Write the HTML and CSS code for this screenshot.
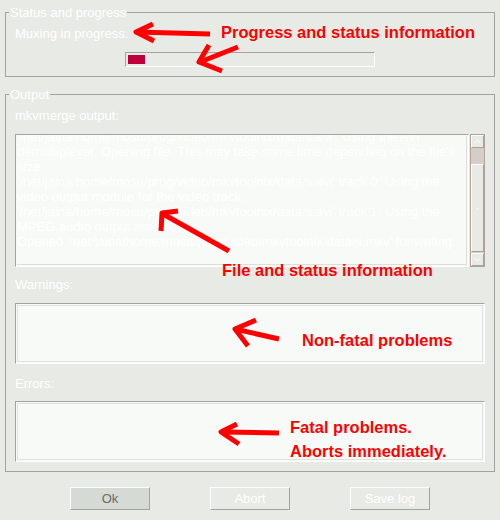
FILE: index.html
```html
<!DOCTYPE html>
<html>
<head>
<meta charset="utf-8">
<link rel="stylesheet" href="styles.css">
</head>
<body>
<div class="window">
  <fieldset class="group group-status">
    <legend>Status and progress</legend>
    <div class="label">Muxing in progress.</div>
    <div class="progress"><div class="progress-fill" style="width:17px"></div></div>
  </fieldset>

  <fieldset class="group group-output">
    <legend>Output</legend>
    <div class="label">mkvmerge output:</div>
    <div class="log">
      <div class="log-text">
        <div class="log-scroll">
          <p>'/net/jaina/home/mosu/prog/video/mkvtoolnix/data/s.avi': Using the AVI demultiplexer. Opening file. This may take some time depending on the file's size.</p>
          <p>'/net/jaina/home/mosu/prog/video/mkvtoolnix/data/s.avi' track 0: Using the video output module for the video track.</p>
          <p>'/net/jaina/home/mosu/prog/video/mkvtoolnix/data/s.avi' track 1: Using the MPEG audio output module.</p>
          <p>Opened '/net/jaina/home/mosu/prog/video/mkvtoolnix/data/s.mkv' for writing.</p>
        </div>
      </div>
      <div class="scrollbar">
        <div class="sb-btn"><svg width="7" height="5" viewBox="0 0 7 5"><path d="M0.5 4 L3.5 1 L6.5 4" fill="none" stroke="#ffffff" stroke-width="1"/></svg></div>
        <div class="sb-trough"><div class="sb-thumb"><span class="sb-grip"></span></div></div>
        <div class="sb-btn"><svg width="7" height="5" viewBox="0 0 7 5"><path d="M0.5 1 L3.5 4 L6.5 1" fill="none" stroke="#ffffff" stroke-width="1"/></svg></div>
      </div>
    </div>
    <div class="label label-warnings">Warnings:</div>
    <div class="textbox textbox-warnings"></div>
    <div class="label label-errors">Errors:</div>
    <div class="textbox textbox-errors"></div>
  </fieldset>

  <div class="buttons">
    <div class="btn btn-default">Ok</div>
    <div class="btn">Abort</div>
    <div class="btn">Save log</div>
  </div>

  <div class="note note-progress">Progress and status information</div>
  <div class="note note-file">File and status information</div>
  <div class="note note-warn">Non-fatal problems</div>
  <div class="note note-fatal">Fatal problems.<br>Aborts immediately.</div>

  <svg class="arrows" width="500" height="520" viewBox="0 0 500 520">
    <g fill="none" stroke="#ff0000" stroke-width="5" stroke-linejoin="round" stroke-linecap="butt">
      <path d="M210 34 L136 32"/>
      <path d="M153 24 L136 32 L154 41"/>
      <path d="M238 47 L200 62"/>
      <path d="M209 45 L199 62 L222 71"/>
      <path d="M229 251 L163 214"/>
      <path d="M178 211 L162 213 L161 231"/>
      <path d="M279 339 L235 329"/>
      <path d="M256 320 L235 329 L248 346"/>
      <path d="M279 433 L221 432"/>
      <path d="M237 424 L221 432 L239 444"/>
    </g>
  </svg>
</div>
</body>
</html>
```

FILE: styles.css
```css
html, body {
  margin: 0;
  padding: 0;
  background: #e8eae6;
}

.window {
  position: relative;
  width: 500px;
  height: 520px;
  box-sizing: border-box;
  padding-top: 5px;
  font-family: "Liberation Sans", Arial, sans-serif;
  font-size: 13px;
  line-height: 15px;
  color: #ffffff;
  overflow: hidden;
}

.group {
  margin: 0 5px;
  padding: 6px 9px 9px 9px;
  border: 1px solid #a2a4a0;
  min-inline-size: 0;
  display: flex;
  flex-direction: column;
}

.group legend {
  padding: 0 1px;
  margin-left: -6px;
  line-height: 15px;
}

.group-output {
  margin-top: 10px;
}

.label {
  height: 15px;
}

.progress {
  align-self: center;
  margin-top: 11px;
  width: 250px;
  height: 15px;
  box-sizing: border-box;
  padding: 2px;
  border: 1px solid;
  border-color: #a2a4a0 #ffffff #ffffff #a2a4a0;
}

.progress-fill {
  height: 9px;
  background: #c0003a;
}

.log {
  margin-top: 11px;
  height: 133px;
  display: flex;
}

.log-text {
  flex: 1;
  box-sizing: border-box;
  border: 1px solid;
  border-color: #a2a4a0 #ffffff #ffffff #a2a4a0;
  padding: 1px 1px 1px 1px;
  background: #f8faf7;
  box-shadow: inset 0 0 0 1px #f8faf7, inset -2px -2px 0 #dcdeda;
  overflow: hidden;
  margin-right: 1px;
}

.log-scroll {
  margin-top: -7px;
  padding-left: 0;
}

.log-scroll p {
  margin: 0;
}

.scrollbar {
  width: 15px;
  box-sizing: border-box;
  border: 1px solid #b5a19b;
  display: flex;
  flex-direction: column;
  background: #e8eae6;
}

.sb-btn {
  height: 13px;
  box-sizing: border-box;
  border: 1px solid;
  border-color: #ffffff #a2a4a0 #a2a4a0 #ffffff;
  background: #e8eae6;
  display: flex;
  align-items: center;
  justify-content: center;
}

.sb-trough {
  flex: 1;
  background: #d6ccc8;
  padding-top: 16px;
}

.sb-thumb {
  height: 88px;
  box-sizing: border-box;
  border: 1px solid;
  border-color: #ffffff #a2a4a0 #a2a4a0 #ffffff;
  background: #e8eae6;
  display: flex;
  align-items: center;
  justify-content: center;
}

.sb-grip {
  width: 1px;
  height: 1px;
  background: #ffffff;
}

.label-warnings {
  margin-top: 10px;
}

.label-errors {
  margin-top: 12px;
}

.textbox {
  margin-top: 11px;
  height: 61px;
  box-sizing: border-box;
  border: 1px solid;
  border-color: #a2a4a0 #ffffff #ffffff #a2a4a0;
  background: #f8faf7;
  box-shadow: inset 0 0 0 1px #f8faf7, inset 0 0 0 2px #e0e2de;
}

.textbox-errors {
  margin-top: 10px;
}

.buttons {
  margin-top: 15px;
  display: flex;
  justify-content: center;
  gap: 60px;
}

.btn {
  width: 80px;
  height: 23px;
  box-sizing: border-box;
  border: 1px solid;
  border-color: #ffffff #a2a4a0 #a2a4a0 #ffffff;
  display: flex;
  align-items: center;
  justify-content: center;
  color: #ffffff;
}

.btn-default {
  background: #d6dad4;
  color: #6a6c68;
}

.note {
  position: absolute;
  font-weight: bold;
  font-size: 16.5px;
  line-height: 20px;
  color: #ff0000;
  white-space: nowrap;
}

.note-progress { left: 221px; top: 22px; }
.note-file { left: 222px; top: 260px; }
.note-warn { left: 302px; top: 330px; }
.note-fatal { left: 290px; top: 415px; line-height: 24px; }

.arrows {
  position: absolute;
  left: 0;
  top: 0;
  pointer-events: none;
}
```
